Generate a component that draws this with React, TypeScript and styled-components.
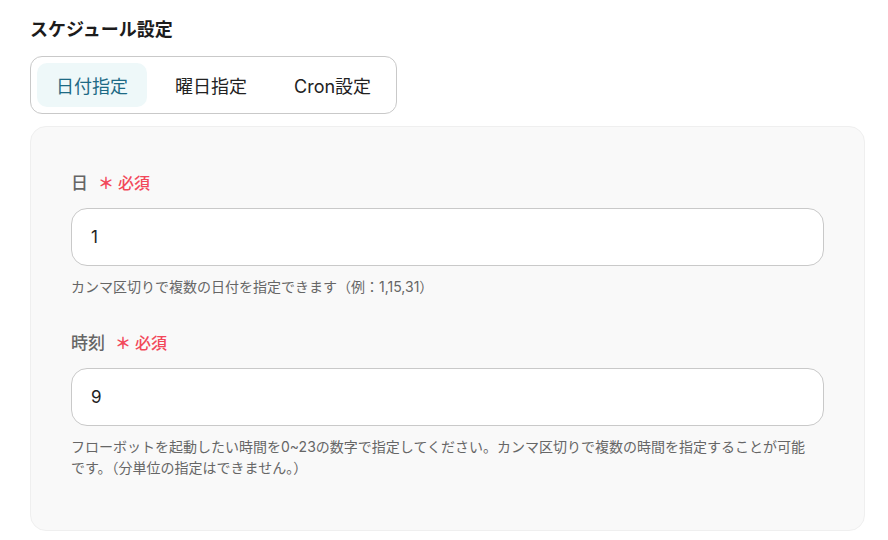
import { useState } from "react"
import styled, { createGlobalStyle } from "styled-components"

const GlobalStyle = createGlobalStyle`
  html, body {
    margin: 0;
    padding: 0;
    background: #ffffff;
    font-family: Inter, "Noto Sans CJK JP", sans-serif;
    color: #222;
  }
  * {
    box-sizing: border-box;
  }
`

const Page = styled.div`
  width: 888px;
  padding: 17px 23px 0 30px;
`

const Heading = styled.h2`
  margin: 0 0 13px;
  font-size: 18px;
  line-height: 26px;
  font-weight: 600;
  color: #1c1c1c;
`

const TabGroup = styled.div`
  display: inline-flex;
  gap: 9px;
  padding: 6px;
  border: 1px solid #c9c9c9;
  border-radius: 12px;
  background: #fff;
`

const Tab = styled.button<{ $active: boolean }>`
  height: 44px;
  padding: 0 19px;
  border: none;
  border-radius: 10px;
  font-family: inherit;
  font-size: 18px;
  background: ${(p) => (p.$active ? "#eef8f9" : "transparent")};
  color: ${(p) => (p.$active ? "#1d6a85" : "#222")};
  cursor: pointer;
`

const Panel = styled.div`
  margin-top: 12px;
  width: 835px;
  padding: 44px 40px 52px;
  background: #f9f9f9;
  border: 1px solid #efefef;
  border-radius: 16px;
`

const Field = styled.div`
  & + & {
    margin-top: 34px;
  }
`

const Label = styled.div`
  display: flex;
  align-items: center;
  margin-bottom: 13px;
  font-size: 17px;
  line-height: 24px;
  font-weight: 500;
  color: #666;
`

const Required = styled.span`
  display: inline-flex;
  align-items: center;
  margin-left: 10px;
  font-size: 16px;
  font-weight: 500;
  color: #f2485a;
`

const Star = styled.span`
  margin-right: 4px;
  font-weight: 700;
`

const Input = styled.input`
  display: block;
  width: 100%;
  height: 58px;
  padding: 0 19px;
  border: 1px solid #c9c9c9;
  border-radius: 16px;
  background: #fff;
  font-family: inherit;
  font-size: 17px;
  color: #222;
  outline: none;
`

const Help = styled.p`
  margin: 10px 0 0;
  max-width: 742px;
  font-size: 14px;
  line-height: 21px;
  color: #666;
`

const tabs = ["日付指定", "曜日指定", "Cron設定"]

export default function App() {
  const [active, setActive] = useState(0)
  const [day, setDay] = useState("1")
  const [hour, setHour] = useState("9")

  return (
    <Page>
      <GlobalStyle />
      <Heading>スケジュール設定</Heading>
      <TabGroup>
        {tabs.map((t, i) => (
          <Tab key={t} $active={active === i} onClick={() => setActive(i)}>
            {t}
          </Tab>
        ))}
      </TabGroup>
      <Panel>
        <Field>
          <Label>
            日
            <Required>
              <Star>＊</Star>必須
            </Required>
          </Label>
          <Input value={day} onChange={(e) => setDay(e.target.value)} />
          <Help>カンマ区切りで複数の日付を指定できます（例：1,15,31）</Help>
        </Field>
        <Field>
          <Label>
            時刻
            <Required>
              <Star>＊</Star>必須
            </Required>
          </Label>
          <Input value={hour} onChange={(e) => setHour(e.target.value)} />
          <Help>
            フローボットを起動したい時間を0~23の数字で指定してください。カンマ区切りで複数の時間を指定することが可能です。（分単位の指定はできません。）
          </Help>
        </Field>
      </Panel>
    </Page>
  )
}
